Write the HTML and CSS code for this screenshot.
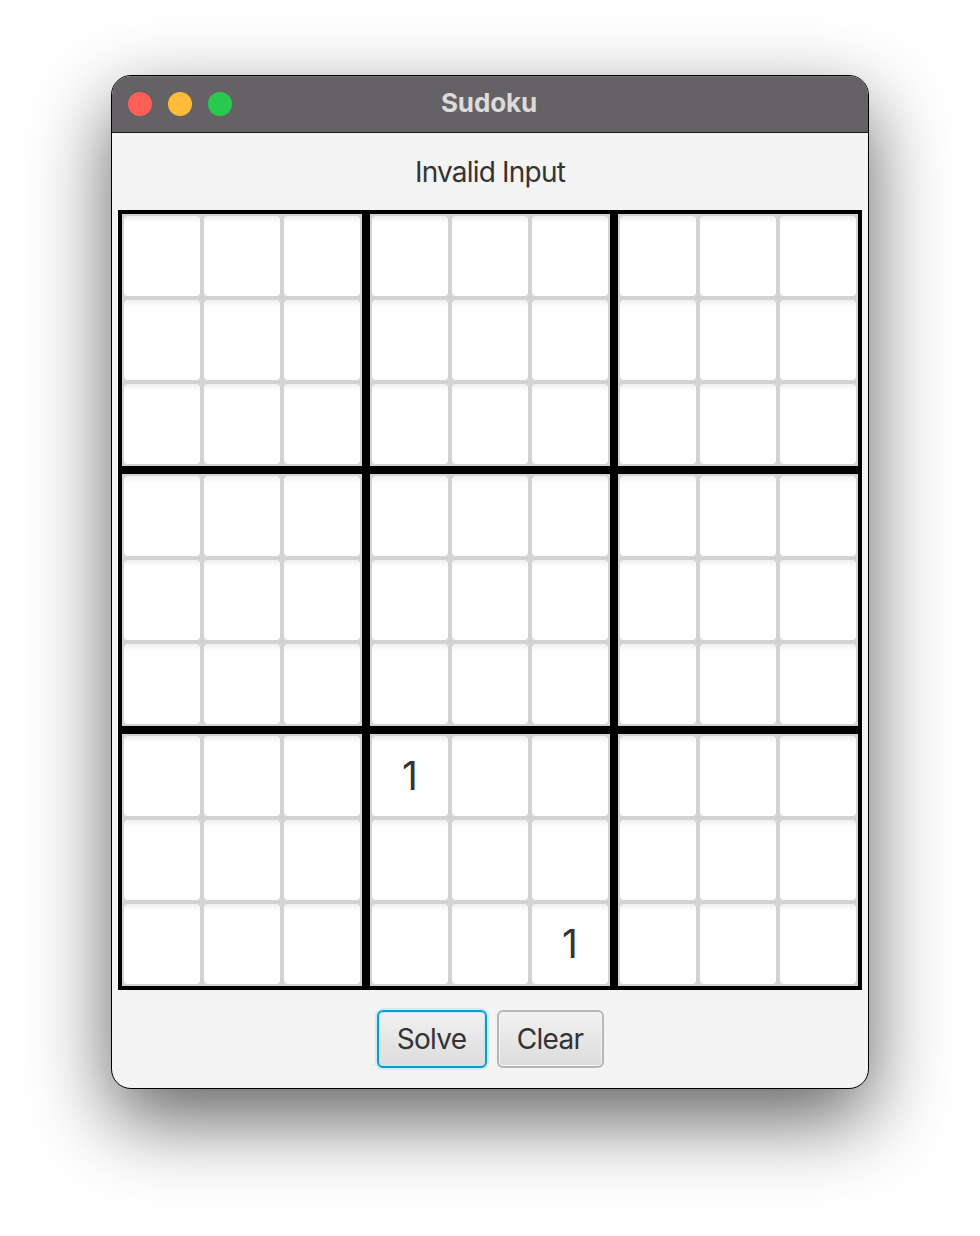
FILE: index.html
```html
<!DOCTYPE html>
<html>
<head>
    <meta charset="utf-8">
    <title>Sudoku</title>
    <link rel="stylesheet" href="styles.css">
</head>
<body>
    <div class="window">
        <div class="titlebar">
            <div class="lights">
                <span class="light red"></span>
                <span class="light yellow"></span>
                <span class="light green"></span>
            </div>
            <div class="title">Sudoku</div>
        </div>
        <div class="message">Invalid Input</div>
        <div class="board">
            <div class="block">
                <div class="cell"><div class="field"></div></div><div class="cell"><div class="field"></div></div><div class="cell"><div class="field"></div></div>
                <div class="cell"><div class="field"></div></div><div class="cell"><div class="field"></div></div><div class="cell"><div class="field"></div></div>
                <div class="cell"><div class="field"></div></div><div class="cell"><div class="field"></div></div><div class="cell"><div class="field"></div></div>
            </div>
            <div class="block">
                <div class="cell"><div class="field"></div></div><div class="cell"><div class="field"></div></div><div class="cell"><div class="field"></div></div>
                <div class="cell"><div class="field"></div></div><div class="cell"><div class="field"></div></div><div class="cell"><div class="field"></div></div>
                <div class="cell"><div class="field"></div></div><div class="cell"><div class="field"></div></div><div class="cell"><div class="field"></div></div>
            </div>
            <div class="block">
                <div class="cell"><div class="field"></div></div><div class="cell"><div class="field"></div></div><div class="cell"><div class="field"></div></div>
                <div class="cell"><div class="field"></div></div><div class="cell"><div class="field"></div></div><div class="cell"><div class="field"></div></div>
                <div class="cell"><div class="field"></div></div><div class="cell"><div class="field"></div></div><div class="cell"><div class="field"></div></div>
            </div>
            <div class="block">
                <div class="cell"><div class="field"></div></div><div class="cell"><div class="field"></div></div><div class="cell"><div class="field"></div></div>
                <div class="cell"><div class="field"></div></div><div class="cell"><div class="field"></div></div><div class="cell"><div class="field"></div></div>
                <div class="cell"><div class="field"></div></div><div class="cell"><div class="field"></div></div><div class="cell"><div class="field"></div></div>
            </div>
            <div class="block">
                <div class="cell"><div class="field"></div></div><div class="cell"><div class="field"></div></div><div class="cell"><div class="field"></div></div>
                <div class="cell"><div class="field"></div></div><div class="cell"><div class="field"></div></div><div class="cell"><div class="field"></div></div>
                <div class="cell"><div class="field"></div></div><div class="cell"><div class="field"></div></div><div class="cell"><div class="field"></div></div>
            </div>
            <div class="block">
                <div class="cell"><div class="field"></div></div><div class="cell"><div class="field"></div></div><div class="cell"><div class="field"></div></div>
                <div class="cell"><div class="field"></div></div><div class="cell"><div class="field"></div></div><div class="cell"><div class="field"></div></div>
                <div class="cell"><div class="field"></div></div><div class="cell"><div class="field"></div></div><div class="cell"><div class="field"></div></div>
            </div>
            <div class="block">
                <div class="cell"><div class="field"></div></div><div class="cell"><div class="field"></div></div><div class="cell"><div class="field"></div></div>
                <div class="cell"><div class="field"></div></div><div class="cell"><div class="field"></div></div><div class="cell"><div class="field"></div></div>
                <div class="cell"><div class="field"></div></div><div class="cell"><div class="field"></div></div><div class="cell"><div class="field"></div></div>
            </div>
            <div class="block">
                <div class="cell"><div class="field">1</div></div><div class="cell"><div class="field"></div></div><div class="cell"><div class="field"></div></div>
                <div class="cell"><div class="field"></div></div><div class="cell"><div class="field"></div></div><div class="cell"><div class="field"></div></div>
                <div class="cell"><div class="field"></div></div><div class="cell"><div class="field"></div></div><div class="cell"><div class="field">1</div></div>
            </div>
            <div class="block">
                <div class="cell"><div class="field"></div></div><div class="cell"><div class="field"></div></div><div class="cell"><div class="field"></div></div>
                <div class="cell"><div class="field"></div></div><div class="cell"><div class="field"></div></div><div class="cell"><div class="field"></div></div>
                <div class="cell"><div class="field"></div></div><div class="cell"><div class="field"></div></div><div class="cell"><div class="field"></div></div>
            </div>
        </div>
        <div class="actions">
            <button class="btn focused" type="button">Solve</button>
            <button class="btn clear" type="button">Clear</button>
        </div>
    </div>
</body>
</html>
```

FILE: styles.css
```css
*{
    margin: 0;
    padding: 0;
    box-sizing: border-box;
}
body{
    height: 1236px;
    padding: 75px 111px 0;
    background: #fff;
    overflow: hidden;
    font-family: Inter, "Liberation Sans", sans-serif;
}
.window{
    width: 758px;
    height: 1014px;
    border: 1px solid #000;
    border-radius: 20px;
    background: #f4f4f4;
    overflow: hidden;
    box-shadow: 0 30px 80px rgba(0,0,0,0.62);
}
.titlebar{
    display: flex;
    align-items: center;
    height: 57px;
    padding: 0 16px 2px;
    position: relative;
    background: #646265;
    border-top: 1px solid #767477;
    border-bottom: 1px solid #1c1c1c;
}
.lights{
    display: flex;
    gap: 16px;
}
.light{
    width: 24px;
    height: 24px;
    border-radius: 50%;
}
.red{background: #ff5f57;}
.yellow{background: #ffbb39;}
.green{background: #28c94c;}
.title{
    position: absolute;
    left: 0;
    right: 0;
    margin: 0 2px 2px 0;
    text-align: center;
    color: #dcdbdc;
    font-size: 26px;
    font-weight: 700;
    letter-spacing: -0.1px;
}
.message{
    height: 77px;
    line-height: 78px;
    text-align: center;
    color: #333;
    font-size: 28px;
    letter-spacing: -0.8px;
}
.board{
    display: grid;
    grid-template-columns: repeat(3, 240px);
    gap: 8px;
    width: 744px;
    margin: 0 6px;
    border: 4px solid #000;
    background: #000;
}
.block{
    display: grid;
    grid-template-columns: repeat(3, 80px);
    grid-auto-rows: 84px;
}
.cell{
    padding: 2px;
    background: #d3d3d3;
}
.field{
    display: flex;
    align-items: center;
    justify-content: center;
    height: 100%;
    padding-bottom: 2px;
    border-radius: 4px;
    background: linear-gradient(#efefef, #fff 7px);
    color: #333;
    font-size: 39px;
}
.actions{
    display: flex;
    justify-content: center;
    gap: 10px;
    padding-top: 20px;
}
.btn{
    width: 110px;
    height: 58px;
    border: 2px solid #b6b6b6;
    border-radius: 6px;
    background: linear-gradient(#f1f1f1, #dcdcdc);
    box-shadow: inset 0 0 0 1px #f6f6f6;
    color: #333;
    font-family: inherit;
    font-size: 28px;
    letter-spacing: -0.7px;
}
.clear{
    width: 107px;
}
.focused{
    border-color: #039ed3;
    box-shadow: inset 0 0 0 1px #cfe6ef, 0 0 0 2px #d4e9f2;
}
```
